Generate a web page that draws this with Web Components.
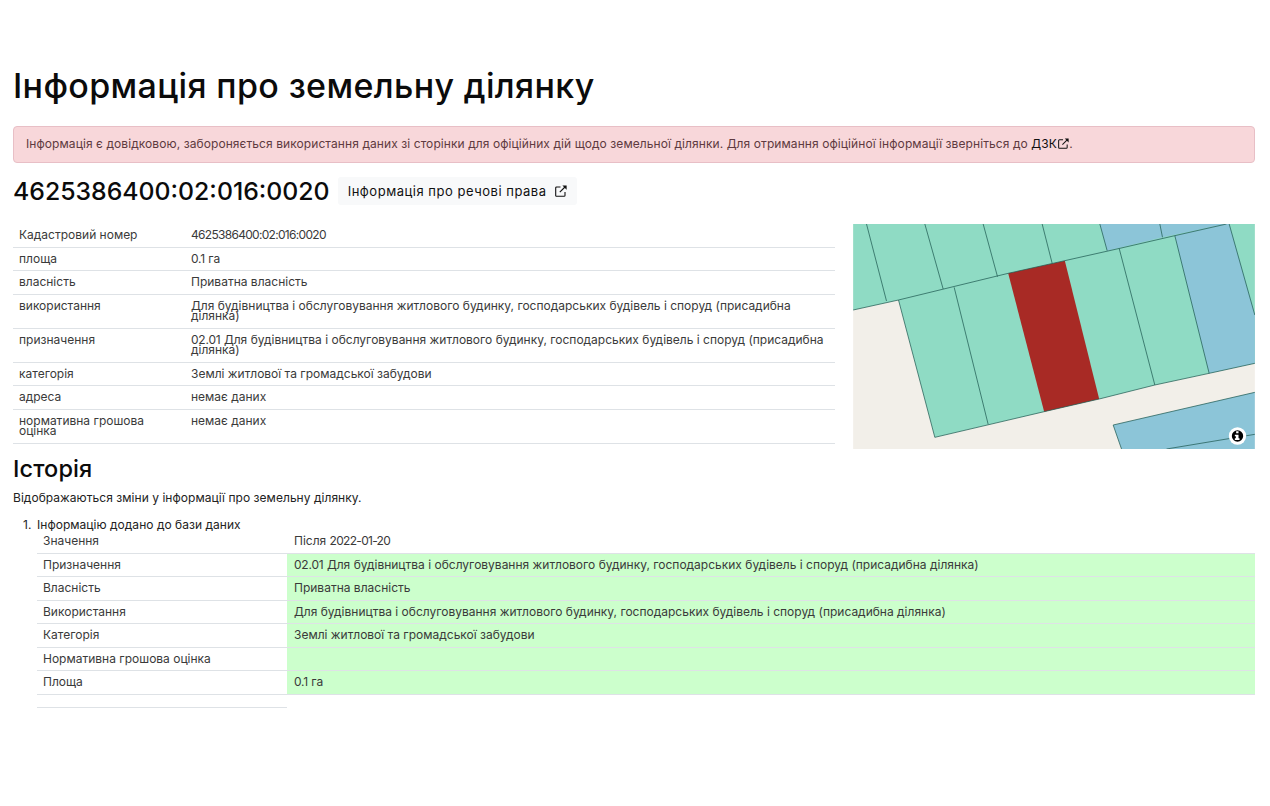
<!DOCTYPE html>
<html lang="uk"><head><meta charset="utf-8"><title>Земельна ділянка</title>
<style>
html,body{margin:0;background:#fff}
body{font-family:Inter,"Noto Sans",sans-serif;color:#212529;font-size:12px}
.d{letter-spacing:-.7px}
.e{letter-spacing:-.2px}
</style></head><body>
<land-page>
  <page-title slot="title">Інформація про земельну ділянку</page-title>
  <notice-alert slot="alert">Інформація є довідковою, забороняється використання даних зі сторінки для офіційних дій щодо земельної ділянки. Для отримання офіційної інформації зверніться до <a>ДЗК <ext-icon size="11"></ext-icon></a>.</notice-alert>
  <parcel-head slot="head" number="4625386400:02:016:0020" action="Інформація про речові права"></parcel-head>
  <info-table slot="info">
    <info-row label="Кадастровий номер"><span class="d">4625386400:02:016:0020</span></info-row>
    <info-row label="площа"><span class="e">0.1</span> га</info-row>
    <info-row label="власність">Приватна власність</info-row>
    <info-row label="використання">Для будівництва і обслуговування житлового будинку, господарських будівель і споруд (присадибна ділянка)</info-row>
    <info-row label="призначення"><span class="e">02.01</span> Для будівництва і обслуговування житлового будинку, господарських будівель і споруд (присадибна ділянка)</info-row>
    <info-row label="категорія">Землі житлової та громадської забудови</info-row>
    <info-row label="адреса">немає даних</info-row>
    <info-row label="нормативна грошова оцінка">немає даних</info-row>
  </info-table>
  <parcel-map slot="map"></parcel-map>
  <history-section slot="history" heading="Історія" intro="Відображаються зміни у інформації про земельну ділянку.">
    <history-entry title="Інформацію додано до бази даних">
      <hist-row label="Значення" plain>Після <span class="d">2022-01-20</span></hist-row>
      <hist-row label="Призначення"><span class="e">02.01</span> Для будівництва і обслуговування житлового будинку, господарських будівель і споруд (присадибна ділянка)</hist-row>
      <hist-row label="Власність">Приватна власність</hist-row>
      <hist-row label="Використання">Для будівництва і обслуговування житлового будинку, господарських будівель і споруд (присадибна ділянка)</hist-row>
      <hist-row label="Категорія">Землі житлової та громадської забудови</hist-row>
      <hist-row label="Нормативна грошова оцінка"></hist-row>
      <hist-row label="Площа"><span class="e">0.1</span> га</hist-row>
      <hist-row label="" plain empty></hist-row>
    </history-entry>
  </history-section>
</land-page>
<script>
function def(name, html){
  customElements.define(name, class extends HTMLElement{
    constructor(){super();this.attachShadow({mode:'open'});}
    connectedCallback(){
      const a=n=>this.getAttribute(n)??'';
      this.shadowRoot.innerHTML = typeof html==='function'?html(a,this):html;
    }
  });
}
const EXT=(s)=>`<svg width="${s}" height="${s}" viewBox="0 0 12 12" fill="none" stroke="currentColor" stroke-width="1.1" style="vertical-align:-1px"><path d="M5.5 2H1.6a.9.9 0 0 0-.9.9v7.5a.9.9 0 0 0 .9.9h7.5a.9.9 0 0 0 .9-.9V7"/><path d="M4.8 7.2L10 2"/><path d="M7.4 .6h4.2v4.2z" fill="currentColor" stroke="none"/></svg>`;
def('ext-icon',(a)=>`<style>:host{display:inline}svg{margin-left:-2px}</style>${EXT(a('size')||12)}`);
def('land-page',`<style>
:host{display:block;padding:65px 15px 0 13px}
.split{display:flex;justify-content:space-between;align-items:flex-start}
.l{width:822px}
</style>
<slot name="title"></slot><slot name="alert"></slot><slot name="head"></slot>
<div class="split"><div class="l"><slot name="info"></slot></div><slot name="map"></slot></div>
<slot name="history"></slot>`);
def('page-title',`<style>:host{display:block;font-size:34px;line-height:42px;font-weight:500;letter-spacing:.35px;color:#0b0b0b;margin-bottom:19px}</style><slot></slot>`);
def('notice-alert',`<style>
:host{display:block;box-sizing:border-box;height:37px;background:#f8d7da;border:1px solid #e8bfc6;border-radius:4px;padding:0 12px;line-height:34px;font-size:12px;letter-spacing:.08px;color:#5e3a40}
::slotted(a){color:#111}
</style><slot></slot>`);
def('parcel-head',(a)=>`<style>
:host{display:flex;align-items:center;gap:8px;margin-top:14px;height:28px;margin-bottom:19px}
.n{font-size:24.8px;font-weight:500;color:#0b0b0b}
.b{display:flex;align-items:center;gap:8px;box-sizing:border-box;height:28px;padding:0 10px;background:#f8f9fa;border-radius:3px;font-size:13px;letter-spacing:.52px;color:#111}
</style><span class="n">${a('number')}</span><span class="b">${a('action')}${EXT(12)}</span>`);
def('info-table',`<style>:host{display:block}</style><slot></slot>`);
def('info-row',(a)=>`<style>
:host{display:grid;grid-template-columns:172px 1fr;border-bottom:1px solid #dee2e6;line-height:10.5px;font-size:12px;color:#3a3a3a}
div{padding:6px}
</style><div>${a('label')}</div><div><slot></slot></div>`);
def('parcel-map',`<style>:host{display:block;width:402px;height:225px;flex:none}svg{display:block}</style>
<svg width="402" height="225" viewBox="10 12 1205 675">
<rect x="10" y="12" width="1205" height="675" fill="#f2efe9"/>
<polygon fill="#8fdbc4" points="10,12 1215,12 1215,430 1078,460 915,495 748,537 583,575 255,652 146,240 10,270"/>
<polygon fill="#8cc5d8" points="750,12 772,92 938,52 930,12"/>
<polygon fill="#8cc5d8" points="930,12 938,52 1130,12"/>
<polygon fill="#8cc5d8" points="975,47 1130,12 1138,12 1215,285 1215,430 1078,460"/>
<polygon fill="#8cc5d8" points="790,615 1215,517 1215,687 815,687"/>
<polygon fill="#a82a25" points="475,160 645,122 748,537 583,575"/>
<g fill="none" stroke="#1f5a52" stroke-width="2.2">
<path d="M10,270L146,240L475,160L645,122L810,85L975,47L1130,12"/>
<path d="M146,240L255,652L583,575L748,537L915,495L1078,460L1215,430"/>
<path d="M50,12L110,243M225,12L280,207M400,12L443,170M577,12L607,130M313,202L415,613M808,85L915,495M975,47L1078,460M750,12L772,92M930,12L938,52M1138,12L1215,285M790,615L1215,517M790,615L815,687M950,687L1215,643"/>
</g>
<circle cx="1163" cy="648" r="26" fill="#fff"/><circle cx="1163" cy="648" r="17" fill="#000"/>
<path d="M1159,634h7v6h-7zM1155,644h11v11h3v5h-14v-5h3v-6h-3z" fill="#fff"/>
</svg>`);
def('history-section',(a)=>`<style>
:host{display:block;margin-top:4px}
h2{margin:0;font-size:23.5px;line-height:32px;font-weight:500;letter-spacing:.1px;color:#0b0b0b}
p{margin:6px 0 0;line-height:14px;font-size:12px;letter-spacing:.04px;color:#222}
</style><h2>${a('heading')}</h2><p>${a('intro')}</p><slot></slot>`);
def('history-entry',(a)=>`<style>
:host{display:block;padding-left:24px;margin-top:14px;position:relative}
.t{line-height:11px;font-size:12px;letter-spacing:.03px;color:#222}
.m{position:absolute;left:10px;top:0;line-height:11px}
</style><span class="m">1.</span><div class="t">${a('title')}</div><slot></slot>`);
def('hist-row',(a,el)=>`<style>
:host{display:grid;grid-template-columns:250px 1fr;line-height:10.5px;font-size:12px;color:#3a3a3a}
div{padding:6px}
.b{padding-left:7px}
.a{border-bottom:1px solid #dee2e6}
.b{border-bottom:1px solid ${el.hasAttribute('empty')?'transparent':'#dee2e6'};${el.hasAttribute('plain')?'':'background:#cfc;'}}
</style><div class="a">${a('label')}</div><div class="b"><slot></slot></div>`);
</script>
</body></html>
